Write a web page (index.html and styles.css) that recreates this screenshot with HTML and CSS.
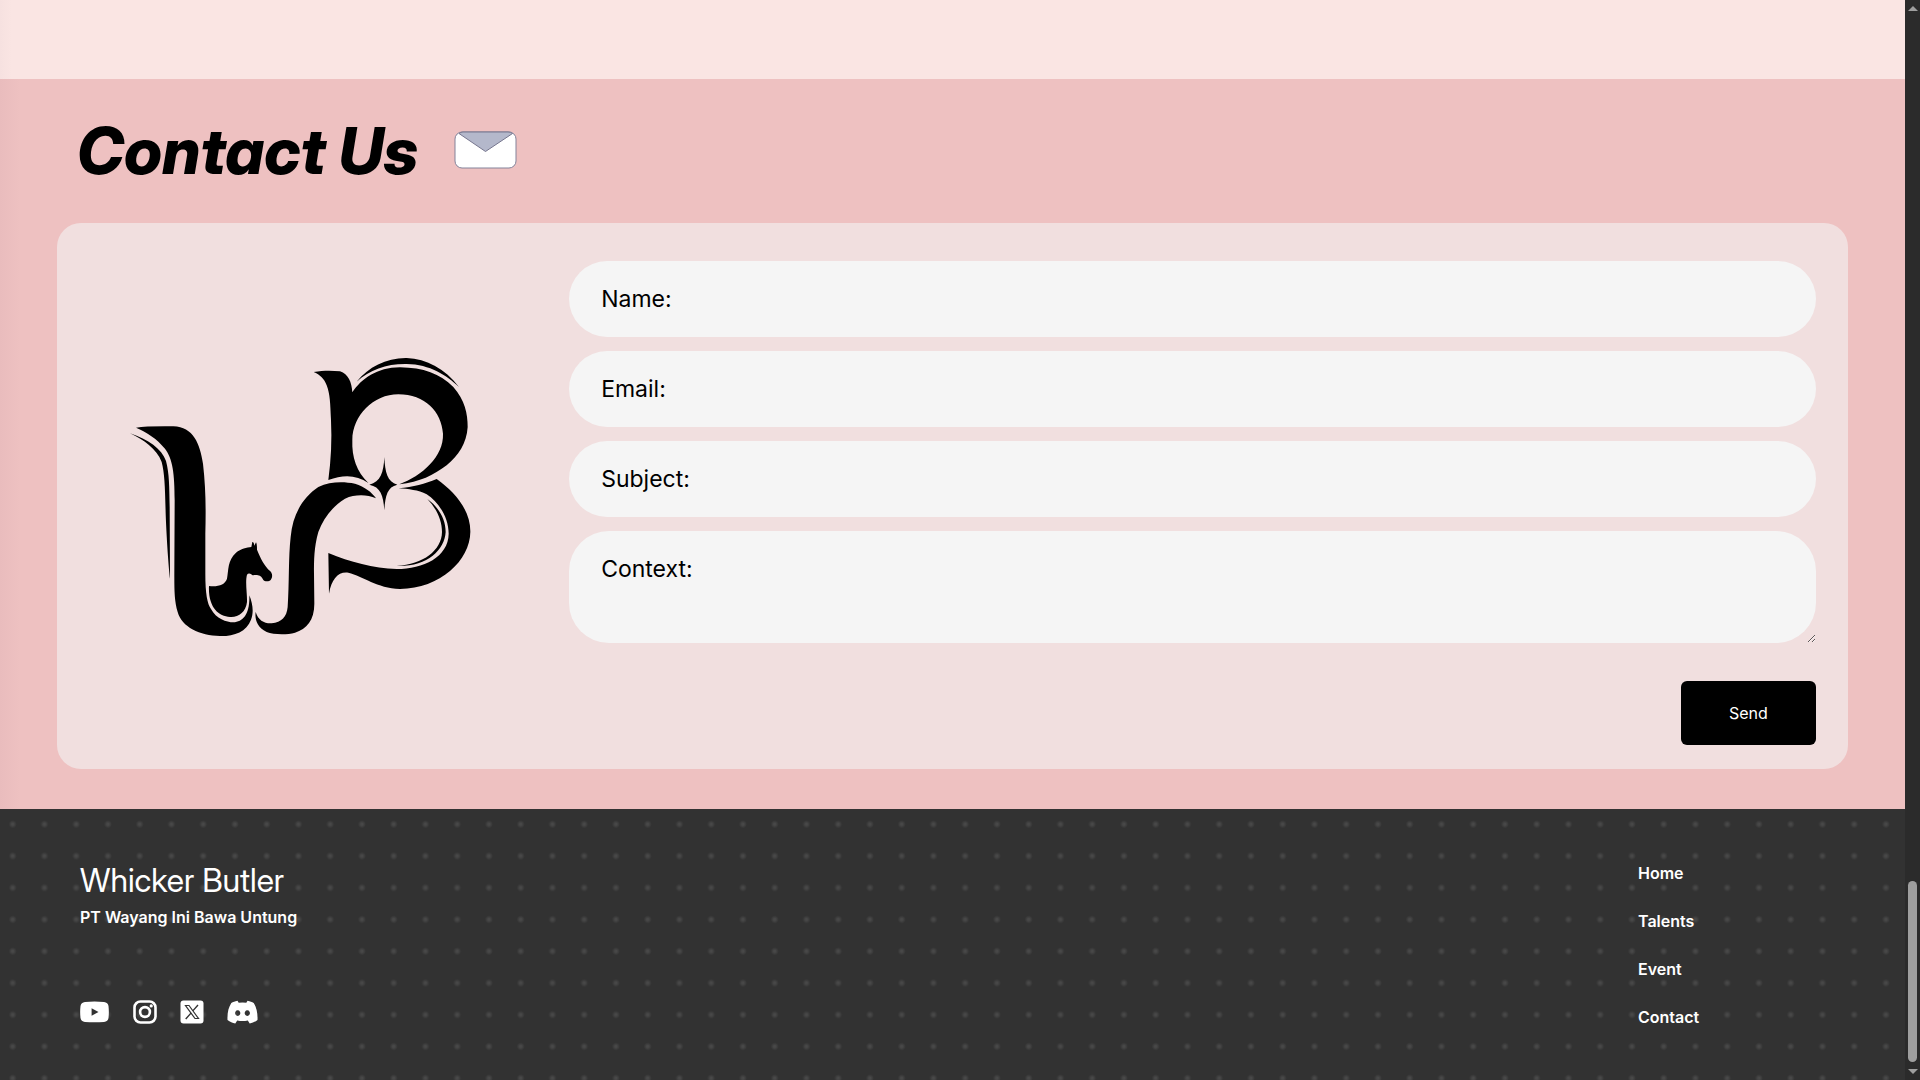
FILE: index.html
```html
<!DOCTYPE html>
<html lang="en">
<head>
<meta charset="utf-8">
<meta name="viewport" content="width=device-width, initial-scale=1">
<title>Whicker Butler - Contact Us</title>
<link rel="stylesheet" href="styles.css">
</head>
<body>
<div class="page">
  <main class="main">
    <div class="previous-section"></div>
    <section class="contact">
      <header class="contact-header">
        <h1 class="contact-title">Contact Us</h1>
        <svg class="envelope" viewBox="0 0 64 40" aria-hidden="true">
          <rect x="1" y="1" width="61" height="36" rx="7" fill="#fff" stroke="#83839a"/>
          <path d="M5 2.500Q7 1 9 1H54Q57 1 58.500 2.500L31.500 20.500Z" fill="#b4b8cb" stroke="#77778f" stroke-linejoin="round"/>
        </svg>
      </header>
      <div class="card">
        <div class="card-logo">
          <svg class="logo" viewBox="60 50 1023 840" role="img" aria-label="Whicker Butler logo">
            <path d="M78 262Q110 257 190 258C250 260 270 310 279 370C287 440 288 500 286 580L286 700C286 760 292 790 303 806C318 835 350 846 370 846C400 845 420 820 418 765C428 790 432 815 423 838C410 875 370 888 330 887C270 886 215 860 203 815C192 780 193 740 193 690L194 480C194 400 188 355 165 325C140 295 110 275 78 262Z"/>
            <path d="M60 279C115 298 155 325 168 362C178 400 178 440 179 500L180 715C176 680 170 600 167 520C165 440 164 400 155 365C140 325 100 298 60 279Z"/>
            <path d="M297 737C325 740 345 733 351 715C356 690 352 660 378 637C393 625 410 621 424 620L427 605Q431 603 433 616L438 606Q441 610 441 628C452 655 462 675 481 693C489 702 487 712 482 719C478 724 463 724 460 719C456 712 452 706 444 705C435 702 428 708 424 702Q416 696 411 703C405 725 412 760 411 785C408 815 385 832 360 830C325 828 294 800 297 737Z"/>
            <path d="M437 815C445 840 462 850 485 849C515 846 530 830 533 800C538 730 535 650 542 590C548 520 580 470 625 440C660 423 700 423 735 430C765 440 785 455 798 474C770 462 735 462 705 475C665 500 640 535 625 575C612 620 612 660 612 700L613 790C613 840 590 865 555 877C530 884 490 883 470 875C440 862 434 835 437 815Z"/>
            <path d="M611 95C640 90 665 90 690 93C715 102 725 125 727 156C755 115 800 82 870 81C940 82 990 100 1030 140C1065 180 1073 220 1073 260C1070 310 1045 345 1010 375C970 405 930 425 868 432C900 420 935 400 960 372C985 345 1000 315 999 280C995 215 945 162 865 162C790 162 728 225 727 300C725 350 740 395 775 428C740 403 700 402 655 419C663 360 666 300 663 240C661 190 660 160 650 135C643 115 630 103 611 95Z"/>
            <path d="M740 124C775 80 830 52 890 53C950 56 1005 85 1047 140C1010 105 960 72 890 71C830 70 780 88 740 124Z"/>
            <path d="M823 350C825 395 832 425 862 433C832 440 826 465 823 510C820 465 812 440 778 433C812 425 821 395 823 350Z"/>
            <path d="M866 444C910 440 945 430 980 416C1035 455 1082 510 1081 575C1080 660 990 745 870 746C800 743 760 708 715 697C685 693 665 715 657 760L655 638C720 665 790 684 860 686C940 686 1015 650 1016 580C1016 530 985 485 950 462C925 449 895 446 866 444Z"/>
            <path d="M952 476C985 500 1007 535 1007 575C1004 630 950 680 860 677C940 672 995 630 996 575C996 540 980 505 952 476Z"/>
          </svg>
        </div>
        <form class="form">
          <input class="field" type="text" placeholder="Name:" aria-label="Name">
          <input class="field" type="email" placeholder="Email:" aria-label="Email">
          <input class="field" type="text" placeholder="Subject:" aria-label="Subject">
          <textarea class="field field-area" placeholder="Context:" aria-label="Context"></textarea>
          <button class="send" type="submit">Send</button>
        </form>
      </div>
    </section>
  </main>
  <footer class="footer">
    <div class="brand">
      <h2 class="brand-name">Whicker Butler</h2>
      <p class="brand-company">PT Wayang Ini Bawa Untung</p>
      <div class="social">
        <a href="#youtube" aria-label="YouTube"><svg width="30" height="24" viewBox="0 0 30 24"><path fill="#fff" fill-rule="evenodd" d="M5 2Q14.500 1 24 2Q28 2.500 28.500 6Q29.200 12 28.500 18Q28 21.500 24 22Q14.500 22.600 5 22Q1 21.500.5 18Q-.2 12 .5 6Q1 2.500 5 2ZM11.600 8.300V15.700L18.500 12Z"/></svg></a>
        <a href="#instagram" aria-label="Instagram"><svg width="24" height="24" viewBox="0 0 24 24" fill="none" stroke="#fff"><rect x="1.500" y="1.500" width="21" height="21" rx="6" stroke-width="2.600"/><circle cx="12" cy="12" r="4.900" stroke-width="2.600"/><circle cx="18.200" cy="5.900" r="1.600" fill="#fff" stroke="none"/></svg></a>
        <a href="#x" aria-label="X"><svg width="24" height="24" viewBox="0 0 24 24"><rect x=".5" y=".5" width="23" height="23" rx="3" fill="#fff"/><g fill="none" stroke="#333"><path d="M5.500 5.500H9L18.500 18.500H15Z" stroke-width="1.200"/><path d="M18 5L12.800 10.900M11.200 12.900L5.700 19" stroke-width="1.400"/></g></svg></a>
        <a href="#discord" aria-label="Discord"><svg width="31" height="24" viewBox="0 0 31 24"><path fill="#fff" fill-rule="evenodd" d="M10.500.8C7.800 1.300 6 2 4.300 3C1.500 7.500.2 12.500.5 20C3 22 5.500 23 8.300 23.600L10.200 20.500Q15.500 21.600 20.800 20.500L22.700 23.600C25.500 23 28 22 30.500 20C30.800 12.500 29.500 7.500 26.700 3C25 2 23.200 1.300 20.500.8L19.300 2.800Q15.500 2.200 11.700 2.800ZM10.700 10.200a2.600 2.900 0 1 0 .01 0ZM20.300 10.200a2.600 2.900 0 1 0 .01 0Z"/></svg></a>
      </div>
    </div>
    <nav class="links" aria-label="Footer">
      <a href="#home">Home</a>
      <a href="#talents">Talents</a>
      <a href="#event">Event</a>
      <a href="#contact">Contact</a>
    </nav>
  </footer>
</div>
<div class="scrollbar" aria-hidden="true">
  <span class="arrow arrow-up"></span>
  <span class="thumb"></span>
  <span class="arrow arrow-down"></span>
</div>
</body>
</html>
```
FILE: styles.css
```css
* {
  box-sizing: border-box;
}

body {
  margin: 0;
  min-height: 100vh;
  display: grid;
  grid-template-columns: minmax(0, 1fr) 15px;
  background: #2b2b2b;
  font-family: Inter, "Liberation Sans", sans-serif;
  color: #000;
}

.page {
  display: flex;
  flex-direction: column;
  container-type: inline-size;
}

/* soft shade along the left edge of the content */
.main {
  background: linear-gradient(to right, #e9bcbd, #eec1c1 20px);
}

.previous-section {
  height: 79px;
  background: linear-gradient(to right, #f6e1e0, #fae5e3 12px);
}

.contact {
  padding: 0 3% 40px;
}

.contact-header {
  display: flex;
  align-items: center;
  gap: 36px;
  height: 144px;
  padding-left: 20px;
}

.contact-title {
  margin: 0;
  font-family: "Inter Display", Inter, "Liberation Sans", sans-serif;
  font-size: 64px;
  line-height: 72px;
  font-weight: 800;
  font-style: italic;
}

.envelope {
  width: 64px;
  height: 40px;
}

.card {
  display: grid;
  grid-template-columns: 422px minmax(0, 1fr);
  gap: 58px;
  padding: 38px 32px 24px;
  border-radius: 24px;
  background: #f1dfdf;
}

.card-logo {
  display: flex;
  align-items: center;
  justify-content: center;
  padding-bottom: 12px;
}

.logo {
  width: 341px;
  height: 280px;
}

.form {
  display: flex;
  flex-direction: column;
  gap: 14px;
}

.field {
  width: 100%;
  height: 76px;
  padding: 0 32px;
  border: 0;
  border-radius: 40px;
  background: #f5f5f5;
  font-family: inherit;
  font-size: 23px;
  line-height: 28px;
  color: #000;
}

.field::placeholder {
  color: #000;
  opacity: 1;
}

.field-area {
  height: 112px;
  padding: 24px 32px;
  resize: vertical;
}

.send {
  align-self: flex-end;
  width: 135px;
  height: 64px;
  margin-top: 24px;
  border: 0;
  border-radius: 6px;
  background: #000;
  color: #fff;
  font-family: inherit;
  font-size: 16px;
}

/* dot grid: sixty columns across the footer */
.footer {
  flex: 1;
  display: flex;
  justify-content: space-between;
  padding: 52px 80px 40px;
  background-color: #323232;
  background-image: radial-gradient(circle at 40% 48%, #484848 1px, transparent 4px);
  background-size: calc(100cqw / 60) calc(100cqw / 60);
  color: #fff;
}

.brand-name {
  margin: 0;
  font-family: "Inter Display", Inter, "Liberation Sans", sans-serif;
  font-size: 32px;
  line-height: 40px;
  font-weight: 400;
}

.brand-company {
  margin: 4px 0 0;
  font-size: 16px;
  line-height: 24px;
  font-weight: 600;
}

.social {
  display: flex;
  gap: 23px;
  margin-top: 71px;
}

.social svg {
  display: block;
}

.links {
  display: flex;
  flex-direction: column;
  gap: 24px;
  width: 187px;
}

.links a {
  font-size: 16px;
  line-height: 24px;
  font-weight: 600;
  color: #fff;
  text-decoration: none;
}

.scrollbar {
  display: flex;
  flex-direction: column;
  align-items: center;
  padding: 6px 0;
}

.arrow {
  border: 5px solid transparent;
}

.arrow-up {
  border-top: 0;
  border-bottom-color: #9f9f9f;
}

.arrow-down {
  border-bottom: 0;
  border-top-color: #9f9f9f;
}

.thumb {
  width: 9px;
  height: 181px;
  margin: auto 0 7px;
  border-radius: 5px;
  background: #9f9f9f;
}
```
